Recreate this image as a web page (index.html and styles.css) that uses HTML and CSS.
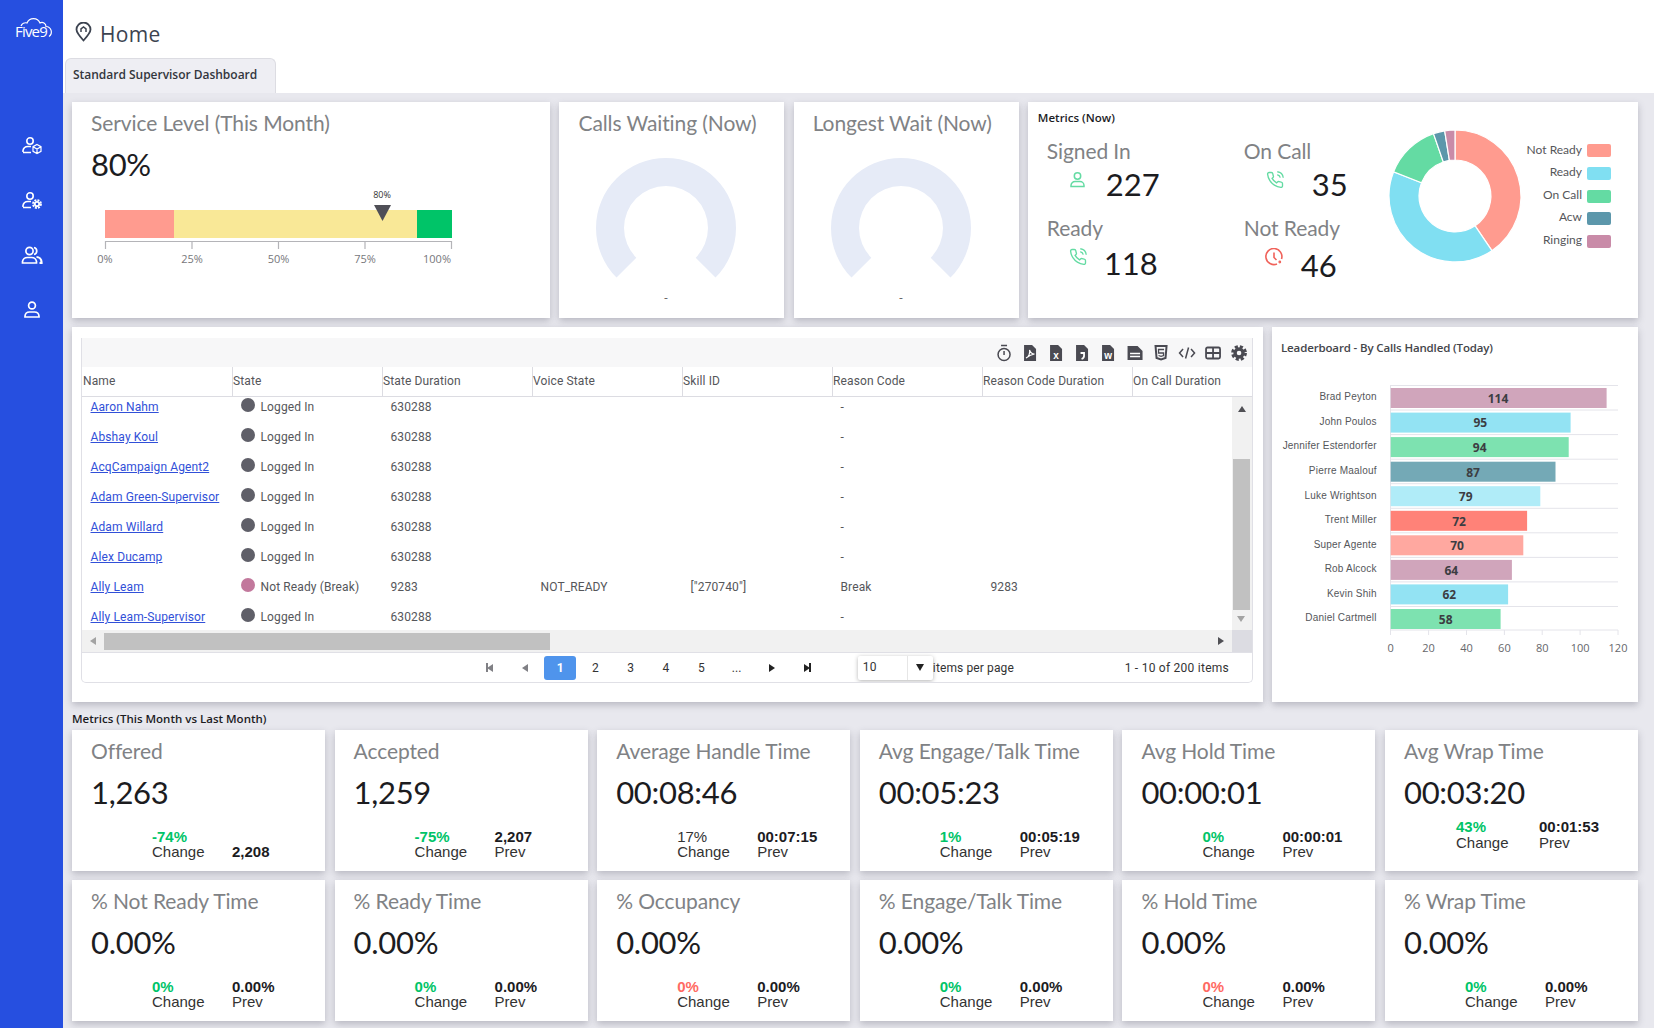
FILE: index.html
```html
<!DOCTYPE html>
<html lang="en">
<head>
<meta charset="utf-8">
<title>Home</title>
<link rel="stylesheet" href="styles.css">
</head>
<body>
<aside class="sidebar">
  <svg class="logo" width="46" height="26" viewBox="0 0 46 26" fill="none" stroke="#fff" stroke-width="1.2">
    <path d="M12 10a5 5 0 0 1 6-3 7 7 0 0 1 13 0 4 4 0 0 1 6 3.500 5.500 5.500 0 0 1 3 10"/>
    <text x="6" y="21" class="logo-text">Five9</text>
  </svg>
  <nav class="nav">
    <svg width="22" height="20" viewBox="0 0 22 20" fill="none" stroke="#fff" stroke-width="1.6"><circle cx="9" cy="5" r="3.2"/><path d="M2 16v-1.500a5 5 0 0 1 5-4h3M2 16.500h8"/><path d="M16 8.500l4 2.200v4.600l-4 2.200-4-2.200v-4.600zM12 10.700l4 2.300 4-2.300M16 13v4.500" stroke-width="1.200"/></svg>
    <svg width="22" height="20" viewBox="0 0 22 20" fill="none" stroke="#fff" stroke-width="1.6"><circle cx="9" cy="5" r="3.200"/><path d="M2 16v-1.500a5 5 0 0 1 5-4h3M2 16.500h8"/><circle cx="16" cy="13" r="2.200" stroke-width="1.800"/><circle cx="16" cy="13" r="4" stroke-width="1.800" stroke-dasharray="2 1.140"/></svg>
    <svg width="22" height="20" viewBox="0 0 22 20" fill="none" stroke="#fff" stroke-width="1.7"><circle cx="8.500" cy="6" r="3.600"/><path d="M1.500 18v-1.500a5 5 0 0 1 5-4h4a5 5 0 0 1 5 4V18zM13 2.500a3.600 3.600 0 0 1 0 7"/><path d="M15.500 12a5 5 0 0 1 5 5v1h-2" stroke-width="2.200"/></svg>
    <svg width="22" height="20" viewBox="0 0 22 20" fill="none" stroke="#fff" stroke-width="1.700"><circle cx="11" cy="5.500" r="3.400"/><path d="M4 17v-1a4.500 4.500 0 0 1 4.500-4h5a4.500 4.500 0 0 1 4.500 4v1z"/></svg>
  </nav>
</aside>

<div class="main">
  <header class="topbar">
    <div class="page-title">
      <svg width="17" height="20" viewBox="0 0 17 20" fill="none" stroke="#3c4350" stroke-width="1.800"><path d="M8.500 18.500C4 13.500 1.500 10.500 1.500 7.500a7 7 0 0 1 14 0c0 3-2.500 6-7 11z"/><path d="M6 10V6.800L8.500 5 11 6.800V10" stroke-width="1.500"/></svg>
      <h1>Home</h1>
    </div>
    <div class="tabs"><div class="tab">Standard Supervisor Dashboard</div></div>
  </header>

  <div class="content">
    <section class="row-top">
      <div class="card">
        <div class="card-title">Service Level (This Month)</div>
        <div class="card-value">80%</div>
        <svg class="bullet" width="370" height="90" viewBox="0 0 370 90">
          <rect x="14" y="22" width="69" height="28" fill="#ff9b8f"/>
          <rect x="83" y="22" width="243" height="28" fill="#f9e897"/>
          <rect x="326" y="22" width="35" height="28" fill="#00c468"/>
          <path d="M14 53.500H361M14.500 53v8M101 53v8M187.500 53v8M274 53v8M360.500 53v8" stroke="#b4b4b8" stroke-width="1.200" fill="none"/>
          <path d="M283 17h17l-8.500 16z" fill="#4f4f57"/>
          <text x="291" y="10" text-anchor="middle" class="t-tiny">80%</text>
          <text x="14" y="75" text-anchor="middle" class="t-axis">0%</text>
          <text x="101" y="75" text-anchor="middle" class="t-axis">25%</text>
          <text x="187.500" y="75" text-anchor="middle" class="t-axis">50%</text>
          <text x="274" y="75" text-anchor="middle" class="t-axis">75%</text>
          <text x="346" y="75" text-anchor="middle" class="t-axis">100%</text>
        </svg>
      </div>

      <div class="card">
        <div class="card-title">Calls Waiting (Now)</div>
        <svg class="gauge" width="225" height="178" viewBox="0 0 225 178">
          <path transform="translate(107 90)" d="M-49.500 49.500A70 70 0 1 1 49.500 49.500L29.700 29.700A42 42 0 1 0-29.700 29.700Z" fill="#e6ebf7"/>
          <text x="107" y="164" text-anchor="middle" class="t-dash">-</text>
        </svg>
      </div>

      <div class="card">
        <div class="card-title">Longest Wait (Now)</div>
        <svg class="gauge" width="225" height="178" viewBox="0 0 225 178">
          <path transform="translate(107 90)" d="M-49.500 49.500A70 70 0 1 1 49.500 49.500L29.700 29.700A42 42 0 1 0-29.700 29.700Z" fill="#e6ebf7"/>
          <text x="107" y="164" text-anchor="middle" class="t-dash">-</text>
        </svg>
      </div>

      <div class="card">
        <div class="small-title now-title">Metrics (Now)</div>
        <div class="now-body">
          <div class="now-grid">
            <div class="stat stat-a">
              <div class="stat-label">Signed In</div>
              <div class="stat-row">
                <svg class="stat-icon" width="17" height="18" viewBox="0 0 17 18" fill="none" stroke="#64dba3" stroke-width="1.500"><circle cx="8.500" cy="5" r="3.200"/><path d="M2 15.500v-1a4 4 0 0 1 4-4h5a4 4 0 0 1 4 4v1z"/></svg>
                <span class="stat-num">227</span>
              </div>
            </div>
            <div class="stat stat-b">
              <div class="stat-label">On Call</div>
              <div class="stat-row">
                <svg class="stat-icon" width="18" height="18" viewBox="0 0 24 24" fill="none" stroke="#64dba3" stroke-width="1.800"><path d="M15.050 5A5 5 0 0 1 19 8.950M15.050 1A9 9 0 0 1 23 8.940m-1 7.980v3a2 2 0 0 1-2.180 2 19.790 19.790 0 0 1-8.630-3.070 19.500 19.500 0 0 1-6-6 19.790 19.790 0 0 1-3.070-8.670A2 2 0 0 1 4.110 2h3a2 2 0 0 1 2 1.720 12.840 12.840 0 0 0 .7 2.810 2 2 0 0 1-.45 2.110L8.090 9.910a16 16 0 0 0 6 6l1.270-1.270a2 2 0 0 1 2.110-.45 12.840 12.840 0 0 0 2.810.7A2 2 0 0 1 22 16.920z"/></svg>
                <span class="stat-num">35</span>
              </div>
            </div>
            <div class="stat stat-c">
              <div class="stat-label">Ready</div>
              <div class="stat-row">
                <svg class="stat-icon" width="18" height="18" viewBox="0 0 24 24" fill="none" stroke="#64dba3" stroke-width="1.800"><path d="M15.050 5A5 5 0 0 1 19 8.950M15.050 1A9 9 0 0 1 23 8.940m-1 7.980v3a2 2 0 0 1-2.180 2 19.790 19.790 0 0 1-8.630-3.070 19.500 19.500 0 0 1-6-6 19.790 19.790 0 0 1-3.070-8.670A2 2 0 0 1 4.110 2h3a2 2 0 0 1 2 1.720 12.840 12.840 0 0 0 .7 2.810 2 2 0 0 1-.45 2.110L8.090 9.910a16 16 0 0 0 6 6l1.270-1.270a2 2 0 0 1 2.110-.45 12.840 12.840 0 0 0 2.810.7A2 2 0 0 1 22 16.920z"/></svg>
                <span class="stat-num">118</span>
              </div>
            </div>
            <div class="stat stat-d">
              <div class="stat-label">Not Ready</div>
              <div class="stat-row">
                <svg class="stat-icon" width="18" height="18" viewBox="0 0 18 18" fill="none" stroke="#f0625a" stroke-width="1.600"><path d="M12 15.900A8 8 0 1 1 16.500 11"/><path d="M9 4.500V9.500l2.500 2.500"/><circle cx="14.800" cy="14" r=".6"/></svg>
                <span class="stat-num">46</span>
              </div>
            </div>
          </div>
          <svg class="donut" width="261" height="150" viewBox="0 0 261 150">
            <g transform="translate(78 70)" stroke="#fff" stroke-width="1.200">
              <path d="M0-66A66 66 0 0 1 36.900 54.700L20.100 29.800A36 36 0 0 0 0-36Z" fill="#ff9b8f"/>
              <path d="M36.900 54.700A66 66 0 0 1-61.400-24.200L-33.500-13.200A36 36 0 0 0 20.100 29.800Z" fill="#80dff2"/>
              <path d="M-61.400-24.200A66 66 0 0 1-21.500-62.400L-11.700-34A36 36 0 0 0-33.500-13.200Z" fill="#64dba3"/>
              <path d="M-21.500-62.400A66 66 0 0 1-10.300-65.200L-5.600-35.600A36 36 0 0 0-11.700-34Z" fill="#5c97ab"/>
              <path d="M-10.300-65.200A66 66 0 0 1 0-66V-36A36 36 0 0 0-5.600-35.600Z" fill="#c98ba8"/>
            </g>
            <text x="205" y="28" text-anchor="end" class="t-legend">Not Ready</text>
            <rect x="210" y="18" width="24" height="13" rx="2" fill="#ff9b8f"/>
            <text x="205" y="50" text-anchor="end" class="t-legend">Ready</text>
            <rect x="210" y="41" width="24" height="13" rx="2" fill="#80dff2"/>
            <text x="205" y="73" text-anchor="end" class="t-legend">On Call</text>
            <rect x="210" y="64" width="24" height="13" rx="2" fill="#64dba3"/>
            <text x="205" y="95" text-anchor="end" class="t-legend">Acw</text>
            <rect x="210" y="86" width="24" height="13" rx="2" fill="#5c97ab"/>
            <text x="205" y="118" text-anchor="end" class="t-legend">Ringing</text>
            <rect x="210" y="109" width="24" height="13" rx="2" fill="#c98ba8"/>
          </svg>
        </div>
      </div>
    </section>

    <section class="row-mid">
      <div class="card table-card">
        <div class="grid-box">
          <div class="toolbar">
            <svg width="16" height="18" viewBox="0 0 16 18" fill="none" stroke="#4a4a52" stroke-width="1.500"><path d="M5 1.500h6M8 7v4"/><circle cx="8" cy="10.500" r="6"/></svg>
            <svg width="16" height="18" viewBox="0 0 16 18"><path d="M2 1h8l4 4v12H2z" fill="#4a4a52"/><path d="M4 14c3-1 4-5 3.500-8 1 3 2 4 5 4-3 .5-5 1.500-8.500 4z" fill="none" stroke="#fff" stroke-width="1.100"/></svg>
            <svg width="16" height="18" viewBox="0 0 16 18"><path d="M2 1h8l4 4v12H2z" fill="#4a4a52"/><text x="8" y="15" text-anchor="middle" class="t-icon">x</text></svg>
            <svg width="16" height="18" viewBox="0 0 16 18"><path d="M2 1h8l4 4v12H2z" fill="#4a4a52"/><path d="M6.500 9h3.500v3c0 1.500-1 2.500-2.500 3" fill="none" stroke="#fff" stroke-width="1.800"/></svg>
            <svg width="16" height="18" viewBox="0 0 16 18"><path d="M2 1h8l4 4v12H2z" fill="#4a4a52"/><text x="8" y="15" text-anchor="middle" class="t-icon">w</text></svg>
            <svg width="18" height="18" viewBox="0 0 18 18"><path d="M1.500 2h10l5 5v9h-15z" fill="#4a4a52"/><path d="M4 9.500h10M4 12.500h10" stroke="#fff" stroke-width="1.400"/></svg>
            <svg width="16" height="18" viewBox="0 0 16 18" fill="none" stroke="#4a4a52" stroke-width="2"><path d="M2.500 2h11l-1 12-4.500 1.500L3.500 14z"/><path d="M11 5.500H5.500V9H10.500v2.500L8 12.300l-2.500-.8" stroke-width="1.300"/></svg>
            <svg width="18" height="18" viewBox="0 0 18 18" fill="none" stroke="#4a4a52" stroke-width="1.500"><path d="M5 5L1.500 9 5 13M13 5l3.500 4-3.500 4M10.500 3.500l-3 11"/></svg>
            <svg width="18" height="18" viewBox="0 0 18 18" fill="none" stroke="#4a4a52" stroke-width="1.800"><rect x="2" y="3.500" width="14" height="11" rx="1.500"/><path d="M2 9h14M9 3.500v11"/></svg>
            <svg width="18" height="18" viewBox="0 0 18 18" fill="none" stroke="#4a4a52"><circle cx="9" cy="9" r="4" stroke-width="3.400"/><circle cx="9" cy="9" r="6.500" stroke-width="2.800" stroke-dasharray="3.100 2.010"/></svg>
          </div>
          <div class="grid-head">
            <div class="th">Name</div><div class="th">State</div><div class="th">State Duration</div><div class="th">Voice State</div><div class="th">Skill ID</div><div class="th">Reason Code</div><div class="th">Reason Code Duration</div><div class="th">On Call Duration</div>
          </div>
          <div class="grid-scroll">
            <div class="grid-view">
              <div class="grid-rows">
                <div class="tr"><div class="td"><a href="#">Aaron Nahm</a></div><div class="td state"><i class="dot"></i>Logged In</div><div class="td">630288</div><div class="td"></div><div class="td"></div><div class="td">-</div><div class="td"></div></div>
                <div class="tr"><div class="td"><a href="#">Abshay Koul</a></div><div class="td state"><i class="dot"></i>Logged In</div><div class="td">630288</div><div class="td"></div><div class="td"></div><div class="td">-</div><div class="td"></div></div>
                <div class="tr"><div class="td"><a href="#">AcqCampaign Agent2</a></div><div class="td state"><i class="dot"></i>Logged In</div><div class="td">630288</div><div class="td"></div><div class="td"></div><div class="td">-</div><div class="td"></div></div>
                <div class="tr"><div class="td"><a href="#">Adam Green-Supervisor</a></div><div class="td state"><i class="dot"></i>Logged In</div><div class="td">630288</div><div class="td"></div><div class="td"></div><div class="td">-</div><div class="td"></div></div>
                <div class="tr"><div class="td"><a href="#">Adam Willard</a></div><div class="td state"><i class="dot"></i>Logged In</div><div class="td">630288</div><div class="td"></div><div class="td"></div><div class="td">-</div><div class="td"></div></div>
                <div class="tr"><div class="td"><a href="#">Alex Ducamp</a></div><div class="td state"><i class="dot"></i>Logged In</div><div class="td">630288</div><div class="td"></div><div class="td"></div><div class="td">-</div><div class="td"></div></div>
                <div class="tr"><div class="td"><a href="#">Ally Leam</a></div><div class="td state"><i class="dot dot-break"></i>Not Ready (Break)</div><div class="td">9283</div><div class="td">NOT_READY</div><div class="td">["270740"]</div><div class="td">Break</div><div class="td">9283</div></div>
                <div class="tr"><div class="td"><a href="#">Ally Leam-Supervisor</a></div><div class="td state"><i class="dot"></i>Logged In</div><div class="td">630288</div><div class="td"></div><div class="td"></div><div class="td">-</div><div class="td"></div></div>
              </div>
            </div>
            <div class="vbar">
              <span class="arrow arrow-up"></span>
              <span class="vthumb"></span>
              <span class="arrow arrow-down"></span>
            </div>
          </div>
          <div class="hbar">
            <div class="htrack">
              <span class="arrow arrow-left"></span>
              <span class="hthumb"></span>
              <span class="arrow arrow-right"></span>
            </div>
            <div class="hcorner"></div>
          </div>
          <div class="pager">
            <div class="pages">
              <span class="pg"><i class="edge"></i><i class="arrow arrow-left dark"></i></span>
              <span class="pg"><i class="arrow arrow-left dark"></i></span>
              <span class="pg current">1</span>
              <span class="pg">2</span>
              <span class="pg">3</span>
              <span class="pg">4</span>
              <span class="pg">5</span>
              <span class="pg">...</span>
              <span class="pg"><i class="arrow arrow-right black"></i></span>
              <span class="pg"><i class="arrow arrow-right black"></i><i class="edge black"></i></span>
            </div>
            <div class="page-size"><span class="ps-value">10</span><span class="ps-btn"><i class="caret"></i></span></div>
            <span class="ipp">items per page</span>
            <span class="range">1 - 10 of 200 items</span>
          </div>
        </div>
      </div>

      <div class="card">
        <div class="small-title board-title">Leaderboard - By Calls Handled (Today)</div>
        <svg class="board" width="366" height="346" viewBox="0 0 366 346">
          <path d="M118 29.500H346M118 54H346M118 78.600H346M118 103.200H346M118 127.700H346M118 152.300H346M118 176.800H346M118 201.400H346M118 225.900H346M118 250.500H346M118 274H346M118.500 29V279M156.600 274v5M194.500 274v5M232.400 274v5M270.200 274v5M308.100 274v5M346 274v5" stroke="#e4e4ea" stroke-width="1" fill="none"/>
          <rect x="118.700" y="32" width="215.900" height="20" fill="#d0a5bb"/>
          <rect x="118.700" y="56.600" width="179.900" height="20" fill="#93e3f3"/>
          <rect x="118.700" y="81.100" width="178" height="20" fill="#7de2b0"/>
          <rect x="118.700" y="105.700" width="164.800" height="20" fill="#74a9b6"/>
          <rect x="118.700" y="130.200" width="149.600" height="20" fill="#b0ecf8"/>
          <rect x="118.700" y="154.800" width="136.400" height="20" fill="#ff8278"/>
          <rect x="118.700" y="179.300" width="132.600" height="20" fill="#ffa8a0"/>
          <rect x="118.700" y="203.900" width="121.200" height="20" fill="#d0a5bb"/>
          <rect x="118.700" y="228.400" width="117.400" height="20" fill="#93e3f3"/>
          <rect x="118.700" y="253" width="109.900" height="20" fill="#7de2b0"/>
          <g class="t-name" text-anchor="end">
            <text x="104.700" y="44">Brad Peyton</text>
            <text x="104.700" y="69">John Poulos</text>
            <text x="104.700" y="93">Jennifer Estendorfer</text>
            <text x="104.700" y="118">Pierre Maalouf</text>
            <text x="104.700" y="143">Luke Wrightson</text>
            <text x="104.700" y="167">Trent Miller</text>
            <text x="104.700" y="192">Super Agente</text>
            <text x="104.700" y="216">Rob Alcock</text>
            <text x="104.700" y="241">Kevin Shih</text>
            <text x="104.700" y="265">Daniel Cartmell</text>
          </g>
          <g class="t-val" text-anchor="middle">
            <text x="226" y="47">114</text>
            <text x="208.300" y="71">95</text>
            <text x="207.700" y="96">94</text>
            <text x="201" y="121">87</text>
            <text x="193.700" y="145">79</text>
            <text x="187" y="170">72</text>
            <text x="185" y="194">70</text>
            <text x="179.300" y="219">64</text>
            <text x="177.300" y="243">62</text>
            <text x="173.700" y="268">58</text>
          </g>
          <g class="t-tick" text-anchor="middle">
            <text x="118.700" y="296">0</text>
            <text x="156.600" y="296">20</text>
            <text x="194.500" y="296">40</text>
            <text x="232.400" y="296">60</text>
            <text x="270.200" y="296">80</text>
            <text x="308.100" y="296">100</text>
            <text x="346" y="296">120</text>
          </g>
        </svg>
      </div>
    </section>

    <div class="small-title section-label">Metrics (This Month vs Last Month)</div>
    <section class="metric-grid">
      <div class="card metric"><div class="card-title">Offered</div><div class="card-value">1,263</div><div class="foot"><b class="up">-74%</b><b></b><span>Change</span><b>2,208</b></div></div>
      <div class="card metric"><div class="card-title">Accepted</div><div class="card-value">1,259</div><div class="foot"><b class="up">-75%</b><b>2,207</b><span>Change</span><span>Prev</span></div></div>
      <div class="card metric"><div class="card-title">Average Handle Time</div><div class="card-value">00:08:46</div><div class="foot"><span>17%</span><b>00:07:15</b><span>Change</span><span>Prev</span></div></div>
      <div class="card metric"><div class="card-title">Avg Engage/Talk Time</div><div class="card-value">00:05:23</div><div class="foot"><b class="up">1%</b><b>00:05:19</b><span>Change</span><span>Prev</span></div></div>
      <div class="card metric"><div class="card-title">Avg Hold Time</div><div class="card-value">00:00:01</div><div class="foot"><b class="up">0%</b><b>00:00:01</b><span>Change</span><span>Prev</span></div></div>
      <div class="card metric"><div class="card-title">Avg Wrap Time</div><div class="card-value">00:03:20</div><div class="foot foot-wrap"><b class="up">43%</b><b>00:01:53</b><span>Change</span><span>Prev</span></div></div>
      <div class="card metric"><div class="card-title">% Not Ready Time</div><div class="card-value">0.00%</div><div class="foot"><b class="up">0%</b><b>0.00%</b><span>Change</span><span>Prev</span></div></div>
      <div class="card metric"><div class="card-title">% Ready Time</div><div class="card-value">0.00%</div><div class="foot"><b class="up">0%</b><b>0.00%</b><span>Change</span><span>Prev</span></div></div>
      <div class="card metric"><div class="card-title">% Occupancy</div><div class="card-value">0.00%</div><div class="foot"><b class="down">0%</b><b>0.00%</b><span>Change</span><span>Prev</span></div></div>
      <div class="card metric"><div class="card-title">% Engage/Talk Time</div><div class="card-value">0.00%</div><div class="foot"><b class="up">0%</b><b>0.00%</b><span>Change</span><span>Prev</span></div></div>
      <div class="card metric"><div class="card-title">% Hold Time</div><div class="card-value">0.00%</div><div class="foot"><b class="down">0%</b><b>0.00%</b><span>Change</span><span>Prev</span></div></div>
      <div class="card metric"><div class="card-title">% Wrap Time</div><div class="card-value">0.00%</div><div class="foot"><b class="up">0%</b><b>0.00%</b><span>Change</span><span>Prev</span></div></div>
    </section>
  </div>
</div>
</body>
</html>
```
FILE: styles.css
```css
* { box-sizing: border-box; }
html, body { margin: 0; height: 100%; overflow: hidden; }
body { display: flex; font-family: "Lato", "Open Sans", sans-serif; background: #e8e8ee; color: #1c1c1f; }

.sidebar { width: 63px; height: 1028px; flex: none; background: #264fe0; display: flex; flex-direction: column; align-items: center; }
.logo { margin-top: 16px; }
.logo-text { font: 400 15px "Open Sans", sans-serif; fill: #fff; stroke: none; letter-spacing: -.8px; }
.nav { margin-top: 94px; display: flex; flex-direction: column; gap: 34.600px; }
.nav svg { display: block; }

.main { flex: 1; min-width: 0; }
.topbar { background: #fff; height: 93px; display: flex; flex-direction: column; justify-content: flex-end; }
.page-title { display: flex; align-items: center; gap: 8px; padding-left: 12px; height: 32px; margin-bottom: 8px; }
.page-title h1 { margin: 0; font: 400 21px "Open Sans", sans-serif; color: #3c4350; letter-spacing: .3px; }
.page-title svg { margin-bottom: 5px; }
.tabs { display: flex; padding-left: 2px; }
.tab { width: 211px; height: 35px; padding-left: 7px; background: #eeeef3; border: 1px solid #dcdce2; border-bottom: 0; border-radius: 6px 6px 0 0; font: 600 12px/31px "Open Sans", sans-serif; color: #33363d; letter-spacing: -.02px; }

.content { padding: 9px 16px 0 9px; }
.card { background: #fff; box-shadow: 0 3px 7px rgba(60, 60, 80, .28); min-width: 0; }
.card-title { padding: 6px 0 0 19px; font-size: 21px; line-height: 30px; color: #808285; white-space: nowrap; letter-spacing: -.1px; }
.card-value { margin: 5px 0 0 19px; font-size: 31px; line-height: 43px; color: #1c1c1f; letter-spacing: -.3px; }
.small-title { font: 600 11.500px/16px "Open Sans", sans-serif; color: #1c1c1f; }

.row-top { display: grid; grid-template-columns: 478.300px 225px 225px 610.100px; gap: 9.200px; height: 216px; }
.bullet { display: block; margin: 2px 0 0 19px; }
.gauge { display: block; }
.t-tiny { font: 9px "Open Sans", sans-serif; fill: #333; }
.t-axis { font: 11px "Open Sans", sans-serif; fill: #77777b; }
.t-dash { font: 12px "Open Sans", sans-serif; fill: #666; }
.t-legend { font: 12px "Lato", sans-serif; fill: #55565a; }
.t-name { font: 10px "Liberation Sans", sans-serif; fill: #55565a; letter-spacing: .2px; }
.t-icon { font: 700 10px "Liberation Sans", sans-serif; fill: #fff; }

.now-title { padding: 8px 0 0 10px; }
.now-body { display: flex; }
.now-grid { width: 330px; margin-left: 19px; padding-top: 10px; display: grid; grid-template-columns: 197px 133px; grid-auto-rows: 66px; row-gap: 11px; }
.stat-label { font-size: 21px; line-height: 30px; color: #808285; white-space: nowrap; letter-spacing: -.1px; }
.stat-row { display: flex; height: 36px; align-items: center; }
.stat-icon { flex: none; margin-bottom: 8px; }
.stat-num { font-size: 31px; line-height: 36px; color: #1c1c1f; }
.stat-a .stat-icon { margin-left: 22px; }
.stat-a .stat-num { margin-left: 20px; }
.stat-b .stat-icon { margin-left: 22px; }
.stat-b .stat-num { margin-left: 28px; margin-bottom: 1px; }
.stat-c .stat-icon { margin-left: 22px; }
.stat-c .stat-num { margin: 3px 0 0 17px; }
.stat-d .stat-icon { margin-left: 21px; }
.stat-d .stat-num { margin: 7px 0 0 18px; }
.donut { flex: none; display: block; }

.row-mid { display: grid; grid-template-columns: 1191px 366px; gap: 9px; height: 375px; margin-top: 9px; }
.table-card { padding: 11px 10px 0 9px; }
.grid-box { width: 1172px; height: 345px; border: 1px solid #e0e0e6; border-top: 0; border-radius: 0 0 5px 5px; font: 12px "Roboto", sans-serif; color: #55565a; display: flex; flex-direction: column; overflow: hidden; }
.toolbar { height: 29px; background: #f7f7f8; display: flex; justify-content: flex-end; align-items: center; flex: none; }
.toolbar svg { display: block; width: 26.100px; height: 18px; }
.grid-head { height: 30px; flex: none; display: grid; grid-template-columns: repeat(8, 150px); border-bottom: 1px solid #dcdce2; }
.th { line-height: 29px; border-left: 1px solid #dcdce2; white-space: nowrap; letter-spacing: .12px; }
.th:first-child { border-left: 0; padding-left: 1px; }
.grid-scroll { display: flex; height: 233px; flex: none; }
.grid-view { flex: 1; overflow: hidden; }
.grid-rows { margin-top: -5px; }
.tr { height: 30px; display: grid; grid-template-columns: repeat(7, 150px); }
.td { padding-left: 8.500px; line-height: 30px; white-space: nowrap; letter-spacing: .12px; }
.td a { color: #3150d8; }
.state { display: flex; align-items: center; }
.dot { width: 14px; height: 14px; border-radius: 50%; background: #5f5f68; margin: -5px 6px 0 0; flex: none; }
.dot-break { background: #c2789c; }
.vbar { width: 20px; flex: none; background: #f1f1f1; position: relative; display: flex; flex-direction: column; align-items: center; }
.vthumb { position: absolute; left: 1px; right: 2px; top: 62px; height: 151px; background: #c1c1c1; }
.arrow { display: inline-block; width: 0; height: 0; border: 4.500px solid transparent; }
.arrow-up { border-bottom: 6px solid #505055; border-top: 0; margin-top: 9px; }
.arrow-down { border-top: 6px solid #a3a3a3; border-bottom: 0; position: absolute; top: 219px; left: 5px; }
.arrow-left { border-right: 6px solid #a3a3a3; border-left: 0; }
.arrow-right { border-left: 6px solid #505055; border-right: 0; }
.hbar { height: 23px; flex: none; display: flex; border-bottom: 1px solid #e0e0e6; }
.htrack { flex: 1; background: #f1f1f1; display: flex; align-items: center; padding: 0 8px; }
.hthumb { width: 446px; height: 17px; margin-left: 8px; background: #c1c1c1; margin-right: auto; }
.hcorner { width: 20px; background: #dcdce2; }
.pager { flex: 1; display: flex; align-items: center; color: #333; padding-left: 390px; letter-spacing: .12px; }
.pages { display: flex; align-items: center; }
.pg { width: 35.300px; height: 24px; display: flex; align-items: center; justify-content: center; font-size: 12px; }
.pg.current { width: 32px; margin: 0 1.600px; background: #4f94ec; color: #fff; font-weight: 700; border-radius: 3px; }
.edge { width: 2px; height: 9px; background: #808085; margin-right: -1px; }
.edge.black { background: #222; margin: 0 0 0 -1px; }
.arrow.dark { border-right-color: #808085; }
.arrow.black { border-left-color: #222; }
.caret { width: 0; height: 0; border: 4.500px solid transparent; border-top: 7px solid #222; border-bottom: 0; }
.page-size { width: 75px; height: 24px; margin-left: 33px; display: flex; background: #fff; box-shadow: 0 1px 4px rgba(0, 0, 0, .3); border-radius: 2px; }
.ps-value { width: 49px; padding-left: 5px; line-height: 22px; }
.ps-btn { flex: 1; display: flex; align-items: center; justify-content: center; border-left: 1px solid #e6e6e6; }
.ipp { margin-left: 0; }
.range { margin-left: auto; padding-right: 23px; letter-spacing: .25px; }

.board-title { padding: 13px 0 0 9px; color: #44454a; letter-spacing: -.14px; }
.board { display: block; }
.t-val { font: 700 12px "Open Sans", sans-serif; fill: #3c3d42; }
.t-tick { font: 11px "Open Sans", sans-serif; fill: #66676b; }

.section-label { height: 28px; padding-top: 9px; }
.metric-grid { display: grid; grid-template-columns: repeat(6, 253px); gap: 9px 9.600px; }
.metric { height: 141px; }
.foot { margin: 15px 0 0 80px; display: grid; grid-template-columns: 80px 1fr; font: 15px/15px "Liberation Sans", sans-serif; color: #333; }
.foot b { color: #1c1c1f; }
.foot b.up { color: #00c468; }
.foot b.down { color: #ff6b63; }
.foot-wrap { margin: 5px 0 0 71px; grid-template-columns: 83px 1fr; line-height: 16px; }
```
